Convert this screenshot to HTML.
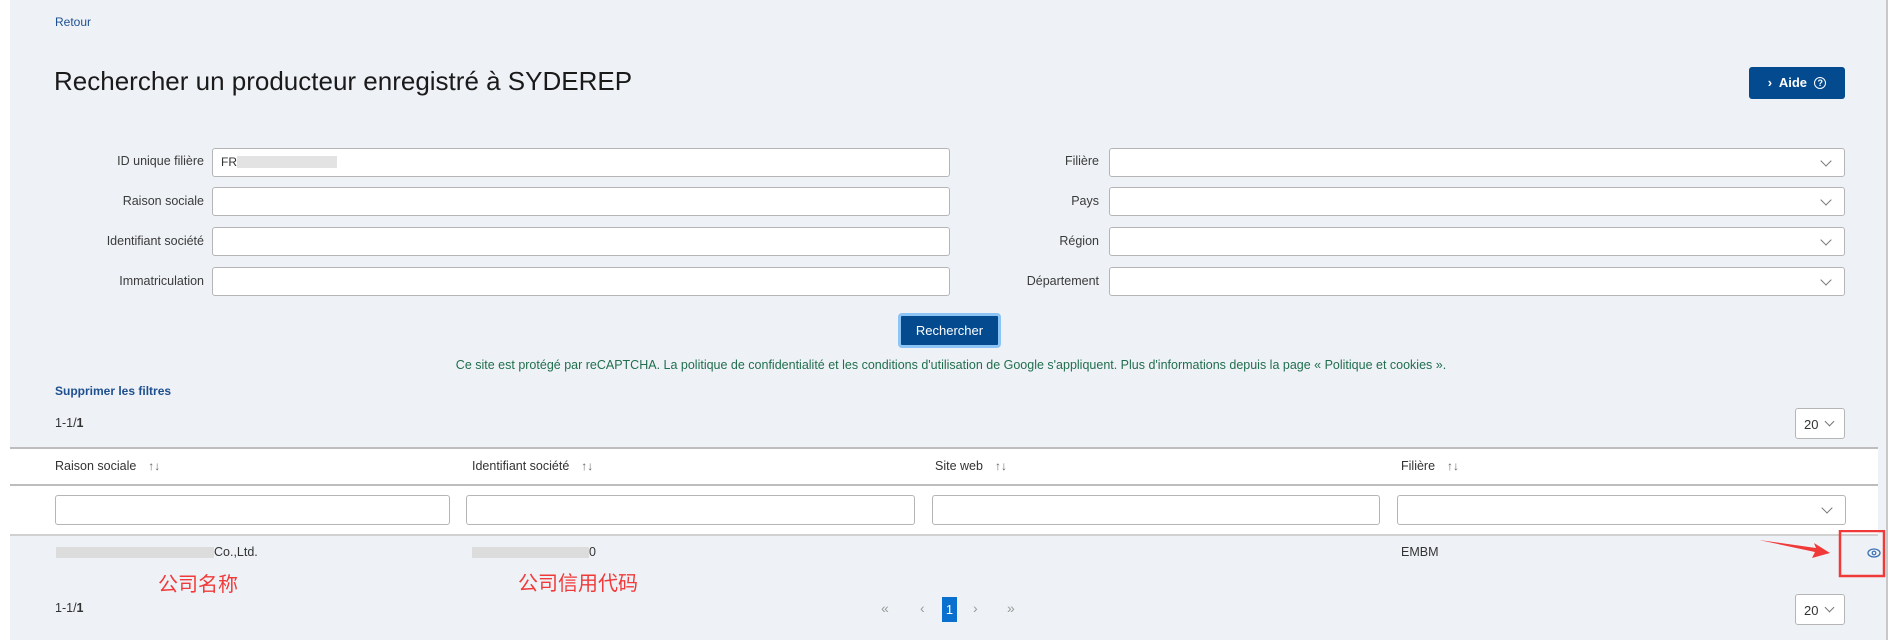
<!DOCTYPE html>
<html><head><meta charset="utf-8"><style>
*{box-sizing:border-box;margin:0;padding:0}
body{width:1902px;height:644px;background:#fff;font-family:"Liberation Sans","Noto Sans CJK SC",sans-serif;position:relative;overflow:hidden;color:#333}
.page{position:absolute;left:10px;top:0;width:1878px;height:640px;background:#eef2f6;border-right:2px solid #c8c8c8}
.a{position:absolute;white-space:nowrap}
.lbl{position:absolute;font-size:12.5px;color:#3a3a3a;text-align:right;width:200px;white-space:nowrap}
.in{position:absolute;background:#fff;border:1px solid #b5b5b5;border-radius:3px}
.chev{position:absolute;width:8px;height:8px;border-right:1.5px solid #777;border-bottom:1.5px solid #777;transform:rotate(45deg)}
.line{position:absolute;left:10px;width:1868px;height:2px;background:#bdbdbd}
.th{position:absolute;font-size:12.5px;color:#333;top:459px}
.th span{color:#666;margin-left:12px;font-size:12px}
</style></head><body>
<div class="page"></div>
<div class="a" style="left:55px;top:15px;font-size:12px;color:#1e4f8f">Retour</div>
<div class="a" style="left:54px;top:66px;font-size:26px;color:#1a1a1a">Rechercher un producteur enregistré à SYDEREP</div>
<div class="a" style="left:1749px;top:67px;width:96px;height:32px;background:#034a8f;border-radius:3px;color:#fff;font-size:13px;font-weight:bold;line-height:32px;text-align:center">›&nbsp; Aide &nbsp;<span style="display:inline-block;width:12px;height:12px;border:1.5px solid #fff;border-radius:50%;font-size:9px;line-height:10px;vertical-align:1px">?</span></div>

<div class="lbl" style="left:4px;top:154px">ID unique filière</div>
<div class="lbl" style="left:4px;top:194px">Raison sociale</div>
<div class="lbl" style="left:4px;top:234px">Identifiant société</div>
<div class="lbl" style="left:4px;top:274px">Immatriculation</div>
<div class="in" style="left:212px;top:148px;width:738px;height:29px"><span style="position:absolute;left:8px;top:6px;font-size:12px">FR</span><span style="position:absolute;left:24px;top:7px;width:100px;height:12px;background:#e3e3e3"></span></div>
<div class="in" style="left:212px;top:187px;width:738px;height:29px"></div>
<div class="in" style="left:212px;top:227px;width:738px;height:29px"></div>
<div class="in" style="left:212px;top:267px;width:738px;height:29px"></div>

<div class="lbl" style="left:899px;top:154px">Filière</div>
<div class="lbl" style="left:899px;top:194px">Pays</div>
<div class="lbl" style="left:899px;top:234px">Région</div>
<div class="lbl" style="left:899px;top:274px">Département</div>
<div class="in" style="left:1109px;top:148px;width:736px;height:29px"><i class="chev" style="right:14px;top:8px"></i></div>
<div class="in" style="left:1109px;top:187px;width:736px;height:29px"><i class="chev" style="right:14px;top:8px"></i></div>
<div class="in" style="left:1109px;top:227px;width:736px;height:29px"><i class="chev" style="right:14px;top:8px"></i></div>
<div class="in" style="left:1109px;top:267px;width:736px;height:29px"><i class="chev" style="right:14px;top:8px"></i></div>

<div class="a" style="left:898px;top:313px;width:103px;height:35px;border:3px solid #8cc4f5;border-radius:4px;background:#034a8f;color:#fff;font-size:13px;text-align:center;line-height:29px">Rechercher</div>
<div class="a" style="left:0;width:1902px;text-align:center;top:358px;font-size:12.5px;color:#216e4e">Ce site est protégé par reCAPTCHA. La politique de confidentialité et les conditions d'utilisation de Google s'appliquent. Plus d'informations depuis la page « Politique et cookies ».</div>
<div class="a" style="left:55px;top:384px;font-size:12px;color:#1e4f8f;font-weight:bold">Supprimer les filtres</div>
<div class="a" style="left:55px;top:416px;font-size:12.5px;color:#333">1-1/<b>1</b></div>
<div class="in" style="left:1795px;top:408px;width:50px;height:31px"><span style="position:absolute;left:8px;top:8px;font-size:13px">20</span><i class="chev" style="left:30px;top:9px;width:7px;height:7px"></i></div>

<div style="position:absolute;left:10px;top:448px;width:1868px;height:87px;background:#fff"></div>
<div class="line" style="top:447px"></div>
<div class="line" style="top:484px"></div>
<div class="line" style="top:534px;background:#d0d0d0"></div>
<div class="th" style="left:55px">Raison sociale<span>↑↓</span></div>
<div class="th" style="left:472px">Identifiant société<span>↑↓</span></div>
<div class="th" style="left:935px">Site web<span>↑↓</span></div>
<div class="th" style="left:1401px">Filière<span>↑↓</span></div>
<div class="in" style="left:55px;top:495px;width:395px;height:30px"></div>
<div class="in" style="left:466px;top:495px;width:449px;height:30px"></div>
<div class="in" style="left:932px;top:495px;width:448px;height:30px"></div>
<div class="in" style="left:1397px;top:495px;width:449px;height:30px"><i class="chev" style="right:14px;top:8px"></i></div>

<div class="a" style="left:56px;top:547px;width:158px;height:11px;background:#dcdcdc"></div>
<div class="a" style="left:214px;top:545px;font-size:12.5px;color:#333">Co.,Ltd.</div>
<div class="a" style="left:472px;top:547px;width:117px;height:11px;background:#dcdcdc"></div>
<div class="a" style="left:589px;top:545px;font-size:12.5px;color:#333">0</div>
<div class="a" style="left:1401px;top:545px;font-size:12.5px;color:#333">EMBM</div>
<div class="a" style="left:158px;top:568px;font-size:20px;color:#f03a3a">公司名称</div>
<div class="a" style="left:518px;top:567px;font-size:20px;color:#f03a3a">公司信用代码</div>
<svg class="a" style="left:1750px;top:530px" width="150" height="62">
<polygon points="9,10 66,18 64,13 80,23 62,28 65,22" fill="#f03a3a"/>
<rect x="90" y="1" width="44" height="45" fill="none" stroke="#f03a3a" stroke-width="2.5"/>
<ellipse cx="124" cy="23" rx="6" ry="4" fill="none" stroke="#3b6fb3" stroke-width="1.3"/>
<circle cx="124" cy="23" r="1.8" fill="none" stroke="#3b6fb3" stroke-width="1.2"/>
</svg>

<div class="a" style="left:55px;top:601px;font-size:12.5px;color:#333">1-1/<b>1</b></div>
<div class="a" style="left:881px;top:600px;font-size:14px;color:#999">«</div>
<div class="a" style="left:920px;top:600px;font-size:14px;color:#999">‹</div>
<div class="a" style="left:942px;top:597px;width:15px;height:25px;background:#0a70d0;color:#fff;font-size:13px;text-align:center;line-height:25px">1</div>
<div class="a" style="left:973px;top:600px;font-size:14px;color:#999">›</div>
<div class="a" style="left:1007px;top:600px;font-size:14px;color:#999">»</div>
<div class="in" style="left:1795px;top:594px;width:50px;height:31px"><span style="position:absolute;left:8px;top:8px;font-size:13px">20</span><i class="chev" style="left:30px;top:9px;width:7px;height:7px"></i></div>
</body></html>
